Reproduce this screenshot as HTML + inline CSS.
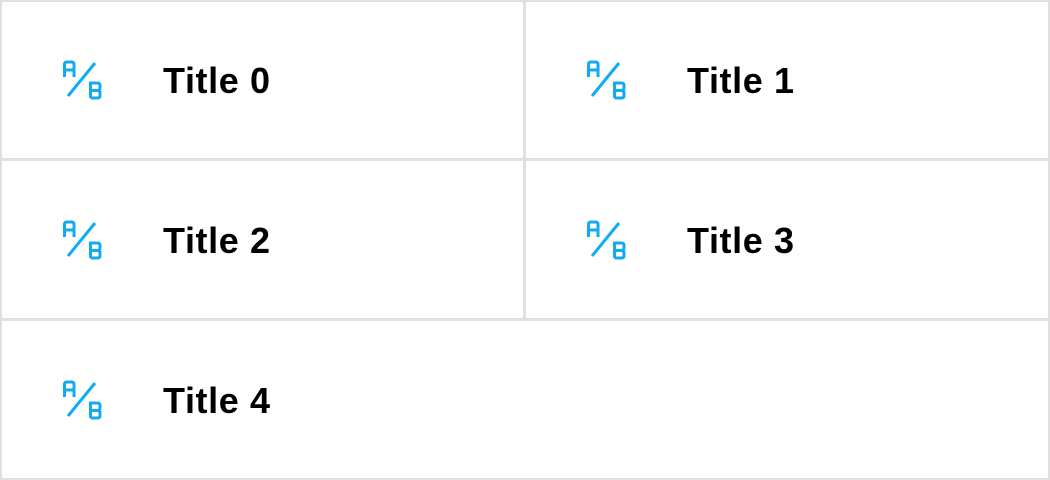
<html><head><style>
body{margin:0;width:1050px;height:480px;background:#fff;position:relative;overflow:hidden;font-family:"Liberation Sans",sans-serif}
.l{position:absolute;background:#e0e0e0}
.cell{position:absolute;width:500px;height:160px}
.t{position:absolute;left:163px;top:60px;font-size:36px;font-weight:bold;color:#000;line-height:42px;letter-spacing:0.6px}
svg{position:absolute;left:58px;top:58px}
</style></head><body>
<div class="l" style="left:0;top:0;width:1050px;height:2px"></div>
<div class="l" style="left:0;top:478px;width:1050px;height:2px"></div>
<div class="l" style="left:0;top:0;width:2px;height:480px"></div>
<div class="l" style="left:1048px;top:0;width:2px;height:480px"></div>
<div class="l" style="left:0;top:158px;width:1050px;height:3px"></div>
<div class="l" style="left:0;top:318px;width:1050px;height:3px"></div>
<div class="l" style="left:523px;top:0;width:3px;height:320px"></div>
<div class="cell" style="left:0;top:0"><svg width="50" height="44"><g fill="none" stroke="#12aaf0" stroke-width="3"><path d="M6.5 19V6.5Q6.5 4 9 4H13.5Q16 4 16 6.5V19M6.5 12H16"/><path d="M10 38L37 5"/><path d="M32.5 40V25H39.5Q42 25 42 27.5V30Q42 32.5 39 32.5H32.5M39 32.5Q42 32.5 42 35V37.5Q42 40 39.5 40H32.5"/></g></svg><div class="t">Title 0</div></div>
<div class="cell" style="left:524px;top:0"><svg width="50" height="44"><g fill="none" stroke="#12aaf0" stroke-width="3"><path d="M6.5 19V6.5Q6.5 4 9 4H13.5Q16 4 16 6.5V19M6.5 12H16"/><path d="M10 38L37 5"/><path d="M32.5 40V25H39.5Q42 25 42 27.5V30Q42 32.5 39 32.5H32.5M39 32.5Q42 32.5 42 35V37.5Q42 40 39.5 40H32.5"/></g></svg><div class="t">Title 1</div></div>
<div class="cell" style="left:0;top:160px"><svg width="50" height="44"><g fill="none" stroke="#12aaf0" stroke-width="3"><path d="M6.5 19V6.5Q6.5 4 9 4H13.5Q16 4 16 6.5V19M6.5 12H16"/><path d="M10 38L37 5"/><path d="M32.5 40V25H39.5Q42 25 42 27.5V30Q42 32.5 39 32.5H32.5M39 32.5Q42 32.5 42 35V37.5Q42 40 39.5 40H32.5"/></g></svg><div class="t">Title 2</div></div>
<div class="cell" style="left:524px;top:160px"><svg width="50" height="44"><g fill="none" stroke="#12aaf0" stroke-width="3"><path d="M6.5 19V6.5Q6.5 4 9 4H13.5Q16 4 16 6.5V19M6.5 12H16"/><path d="M10 38L37 5"/><path d="M32.5 40V25H39.5Q42 25 42 27.5V30Q42 32.5 39 32.5H32.5M39 32.5Q42 32.5 42 35V37.5Q42 40 39.5 40H32.5"/></g></svg><div class="t">Title 3</div></div>
<div class="cell" style="left:0;top:320px"><svg width="50" height="44"><g fill="none" stroke="#12aaf0" stroke-width="3"><path d="M6.5 19V6.5Q6.5 4 9 4H13.5Q16 4 16 6.5V19M6.5 12H16"/><path d="M10 38L37 5"/><path d="M32.5 40V25H39.5Q42 25 42 27.5V30Q42 32.5 39 32.5H32.5M39 32.5Q42 32.5 42 35V37.5Q42 40 39.5 40H32.5"/></g></svg><div class="t">Title 4</div></div>
</body></html>
